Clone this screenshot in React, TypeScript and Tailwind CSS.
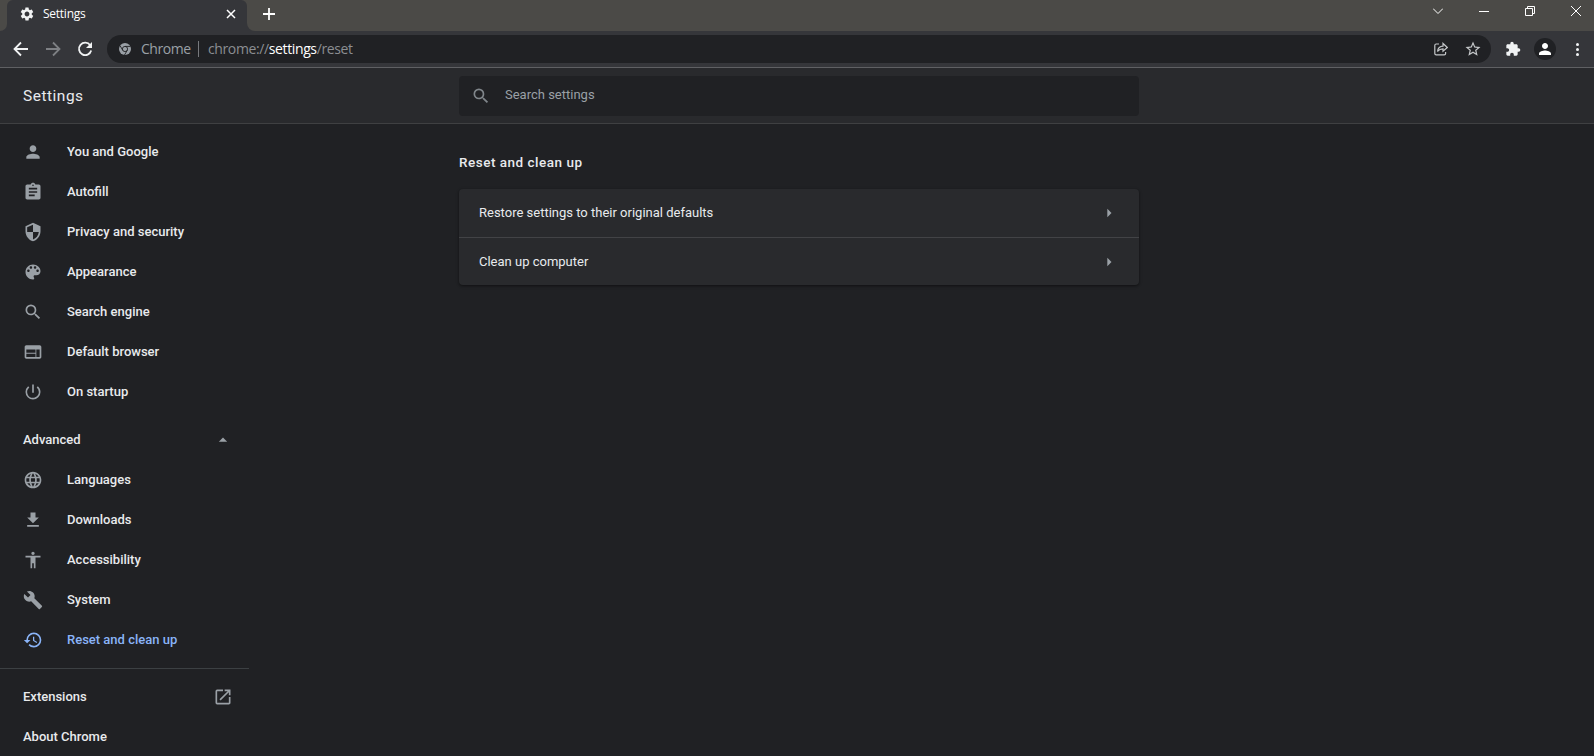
import type { ComponentType, ReactNode } from 'react';
import {
  MdAccessibility,
  MdArrowDropUp,
  MdArrowRight,
  MdAssignment,
  MdBuild,
  MdExtension,
  MdFileDownload,
  MdHistory,
  MdLanguage,
  MdOpenInNew,
  MdPerson,
  MdPowerSettingsNew,
  MdSearch,
  MdSecurity,
  MdSettings,
  MdStarBorder,
  MdWeb,
} from 'react-icons/md';

type NavItem = {
  label: string;
  icon: ComponentType<{ className?: string }>;
  active?: boolean;
};

function PaletteIcon({ className }: { className?: string }) {
  return (
    <svg viewBox="0 0 24 24" className={className} fill="currentColor">
      <path d="M12 3c-4.970 0-9 4.030-9 9s4.030 9 9 9c.83 0 1.500-.67 1.500-1.500 0-.39-.15-.74-.39-1.010-.23-.26-.38-.61-.38-.99 0-.83.67-1.500 1.500-1.500H16c2.760 0 5-2.240 5-5 0-4.420-4.030-8-9-8zm-5.500 9c-.83 0-1.500-.67-1.500-1.500S5.670 9 6.500 9 8 9.670 8 10.500 7.330 12 6.500 12zm3-4C8.670 8 8 7.330 8 6.500S8.670 5 9.500 5s1.500.67 1.500 1.500S10.330 8 9.500 8zm5 0c-.83 0-1.500-.67-1.500-1.500S13.670 5 14.500 5s1.500.67 1.500 1.500S15.330 8 14.500 8zm3 4c-.83 0-1.500-.67-1.500-1.500S16.670 9 17.500 9s1.500.67 1.500 1.500-.67 1.500-1.500 1.500z" />
    </svg>
  );
}

const basicItems: NavItem[] = [
  { label: 'You and Google', icon: MdPerson },
  { label: 'Autofill', icon: MdAssignment },
  { label: 'Privacy and security', icon: MdSecurity },
  { label: 'Appearance', icon: PaletteIcon },
  { label: 'Search engine', icon: MdSearch },
  { label: 'Default browser', icon: MdWeb },
  { label: 'On startup', icon: MdPowerSettingsNew },
];

const advancedItems: NavItem[] = [
  { label: 'Languages', icon: MdLanguage },
  { label: 'Downloads', icon: MdFileDownload },
  { label: 'Accessibility', icon: MdAccessibility },
  { label: 'System', icon: MdBuild },
  { label: 'Reset and clean up', icon: MdHistory, active: true },
];

const resetRows = ['Restore settings to their original defaults', 'Clean up computer'];

function NavRow({ label, icon: Icon, active }: NavItem) {
  return (
    <a className={`flex h-10 items-center pl-[23px] ${active ? 'text-[#8ab4f8]' : ''}`}>
      <Icon className={`size-5 shrink-0 ${active ? '' : 'text-[#9aa0a6]'}`} />
      <span className="ml-6">{label}</span>
    </a>
  );
}

function ChromeLogo() {
  return (
    <svg viewBox="0 0 24 24" className="size-3 shrink-0">
      <circle cx="12" cy="12" r="12" fill="#9aa0a6" />
      <g fill="none" stroke="#202124" strokeWidth="1.8">
        <circle cx="12" cy="12" r="5.2" />
        <path d="M12 6.8h11M7.5 14.6L2 5.2M16.5 14.6L11 24" />
      </g>
    </svg>
  );
}

function TabStrip() {
  return (
    <div className="flex h-[31px] shrink-0 bg-[#35363a] text-xs">
      <div className="w-[7px] rounded-br-lg bg-[#4b4a47]" />
      <div className="w-60 bg-linear-to-b from-[#4b4a47] from-50% to-[#35363a] to-50%">
        <div className="flex h-full items-center rounded-t-md bg-[#35363a] pb-[3px] pl-3 pr-3 text-white">
          <MdSettings className="size-4 text-[#f1f3f4]" />
          <span className="ml-2 font-['Open_Sans',sans-serif] tracking-[-0.25px]">Settings</span>
          <svg viewBox="0 0 8 8" className="ml-auto size-2 overflow-visible" stroke="#fff" strokeWidth="1.5">
            <path d="M0 0l8 8M8 0L0 8" />
          </svg>
        </div>
      </div>
      <div className="flex flex-1 rounded-bl-lg bg-[#4b4a47]">
        <svg viewBox="0 0 12 12" className="ml-4 mt-2 size-3" stroke="#fff" strokeWidth="1.8">
          <path d="M6 0v12M0 6h12" />
        </svg>
        <div className="ml-auto flex h-[22px] items-center text-white">
          <svg viewBox="0 0 10 6" className="h-1.5 w-[10px]" fill="none" stroke="currentColor">
            <path d="M0 .5l5 5 5-5" />
          </svg>
          <div className="ml-9 h-px w-[10px] bg-white" />
          <svg viewBox="0 0 10 10" className="ml-9 size-[10px]" fill="none" stroke="currentColor" strokeWidth="1">
            <path d="M.5 2.5h7v7h-7zM2.5 2.5v-2h7v7h-2" />
          </svg>
          <svg viewBox="0 0 10 10" className="ml-9 mr-[13px] size-[10px]" stroke="currentColor">
            <path d="M0 0l10 10M10 0L0 10" />
          </svg>
        </div>
      </div>
    </div>
  );
}

function NavIcon({ className, children }: { className: string; children: ReactNode }) {
  return (
    <svg viewBox="0 0 16 16" className={`size-4 shrink-0 ${className}`} fill="none" stroke="currentColor" strokeWidth="1.8">
      {children}
    </svg>
  );
}

function Toolbar() {
  return (
    <div className="flex h-[37px] shrink-0 items-center border-b border-[#5f6063] bg-[#35363a]">
      <NavIcon className="ml-[13px] text-[#f1f3f4]">
        <path d="M15 8H2M8 1.5L1.5 8 8 14.5" />
      </NavIcon>
      <NavIcon className="ml-4 text-[#7e8084]">
        <path d="M1 8h13M8 1.5L14.5 8 8 14.5" />
      </NavIcon>
      <NavIcon className="ml-4 text-[#f1f3f4]">
        <path d="M13.2 4.2A6.2 6.2 0 1 0 14.2 9.5" />
        <path d="M15 1v6H9z" fill="currentColor" stroke="none" />
      </NavIcon>
      <div className="ml-[14px] flex h-7 w-[1384px] items-center rounded-full bg-[#202124] pl-3 pr-[9px] font-['Open_Sans',sans-serif] text-sm text-[#9aa0a6]">
        <ChromeLogo />
        <span className="ml-[10px] w-[49px] whitespace-nowrap tracking-[-0.45px]">Chrome</span>
        <div className="ml-2 h-4 w-px bg-[#77797d]" />
        <span className="ml-[9px] tracking-[-0.38px] text-[#8b8e92]">
          chrome://<span className="text-white">settings</span>/reset
        </span>
        <svg viewBox="0 0 14 14" className="ml-auto size-[14px]" fill="none" stroke="#c4c7c9" strokeWidth="1.2">
          <path d="M5 2H2.2Q.8 2 .8 3.400v8q0 1.400 1.400 1.400h8q1.400 0 1.400-1.400V10" />
          <path d="M3.500 9.500C4 6 6 4.300 9 4.200V1.500l4.300 4L9 9.200V6.800C6.500 6.800 5 7.500 3.500 9.500z" />
        </svg>
        <MdStarBorder className="ml-4 size-[18px] text-[#c4c7c9]" />
      </div>
      <MdExtension className="ml-[14px] size-4 text-[#f1f3f4]" />
      <div className="ml-[13px] flex size-[22px] items-center justify-center rounded-full bg-[#202124]">
        <MdPerson className="size-[18px] text-white" />
      </div>
      <div className="ml-5 flex flex-col gap-0.5">
        <div className="size-[3px] rounded-full bg-[#f1f3f4]" />
        <div className="size-[3px] rounded-full bg-[#f1f3f4]" />
        <div className="size-[3px] rounded-full bg-[#f1f3f4]" />
      </div>
    </div>
  );
}

export default function App() {
  return (
    <div className="flex h-[756px] w-[1594px] flex-col overflow-hidden bg-[#202124] font-[Roboto,sans-serif] text-[13px] text-[#e8eaed]">
      <TabStrip />
      <Toolbar />

      <header className="flex h-14 shrink-0 border-b border-[#3f4042] bg-[#292a2d]">
        <h1 className="w-[459px] pl-[23px] pt-4 text-[15.5px] leading-6 tracking-[0.5px]">Settings</h1>
        <div className="mt-2 flex h-10 w-[680px] rounded-sm bg-[#202124] text-[#9aa0a6]">
          <MdSearch className="ml-[12px] mt-[10px] size-5 text-[#80868b]" />
          <span className="ml-[14px] mt-[9px] leading-5">Search settings</span>
        </div>
      </header>

      <div className="flex min-h-0 flex-1">
        <nav className="w-[249px] shrink-0 pt-2 font-medium">
          {basicItems.map((item) => (
            <NavRow key={item.label} {...item} />
          ))}
          <button className="mt-2 flex h-10 w-full items-center justify-between pl-[23px] pr-4">
            Advanced
            <MdArrowDropUp className="size-5 text-[#9aa0a6]" />
          </button>
          {advancedItems.map((item) => (
            <NavRow key={item.label} {...item} />
          ))}
          <div className="my-2 h-px bg-[#3c4043]" />
          <a className="flex h-10 items-center justify-between pl-[23px] pr-4">
            Extensions
            <MdOpenInNew className="size-5 text-[#9aa0a6]" />
          </a>
          <a className="flex h-10 items-center pl-[23px]">About Chrome</a>
        </nav>

        <main className="ml-[210px] w-[680px]">
          <h2 className="pb-[17px] pt-7 text-[13.5px] font-medium leading-5 tracking-[0.5px]">Reset and clean up</h2>
          <div className="rounded bg-[#292a2d] shadow-[0_1px_2px_rgba(0,0,0,.3),0_1px_3px_1px_rgba(0,0,0,.15)]">
            {resetRows.map((label) => (
              <div key={label} className="flex h-12 items-center justify-between border-t border-[#424346] px-5 first:border-t-0">
                {label}
                <MdArrowRight className="size-5 text-[#9aa0a6]" />
              </div>
            ))}
          </div>
        </main>
      </div>
    </div>
  );
}
